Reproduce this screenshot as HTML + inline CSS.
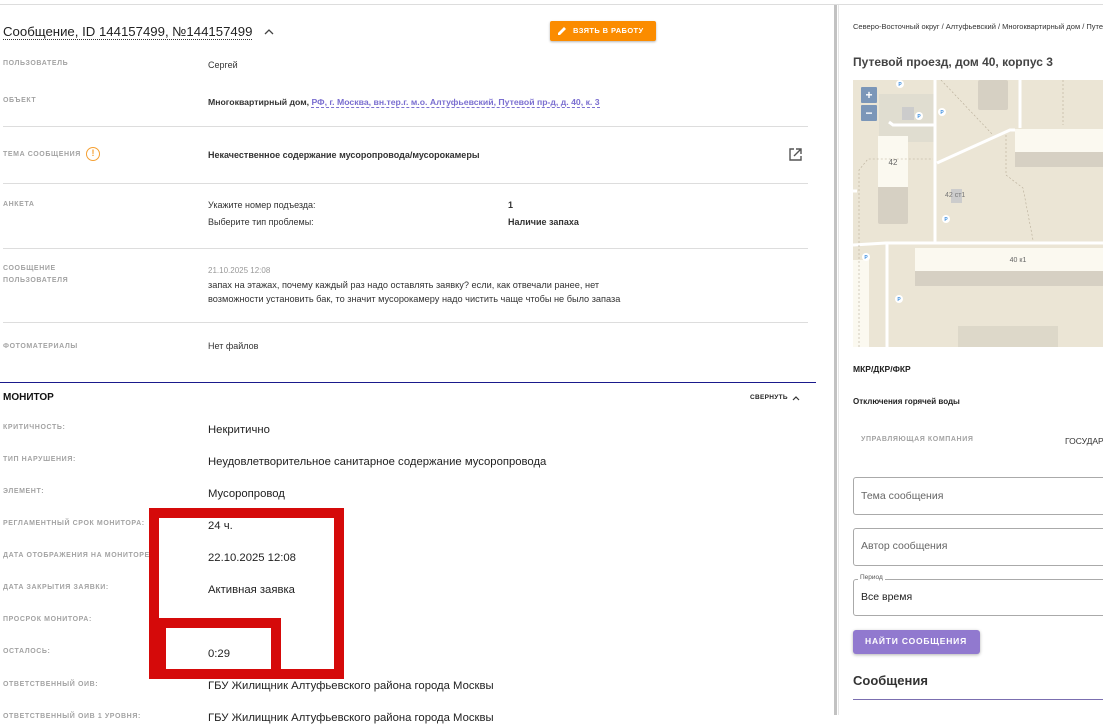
<!DOCTYPE html>
<html><head><meta charset="utf-8"><style>
*{margin:0;padding:0;box-sizing:border-box}
body{width:1103px;height:715px;overflow:hidden;background:#fff;font-family:"Liberation Sans","Noto Sans CJK SC",sans-serif;color:#333;position:relative}
.a{position:absolute;white-space:nowrap;line-height:1}
.l{font-size:7px;font-weight:bold;color:#a3a3a3;letter-spacing:.6px;text-transform:uppercase}
.v{font-size:9px;color:#333}
.m{font-size:11.3px;color:#222}
.hr{position:absolute;left:3px;width:805px;height:1px;background:#ddd}
</style></head><body>
<div style="position:absolute;left:0;top:4px;width:1103px;height:1px;background:#ddd"></div>
<div style="position:absolute;left:834px;top:5px;width:3px;height:710px;background:#c2c2c2"></div>
<div style="position:absolute;left:838px;top:5px;width:1px;height:710px;background:#e5e5e5"></div>

<div class="a" style="left:3px;top:25px;font-size:13.2px;color:#222;border-bottom:1px dotted #333;padding-bottom:1px">Сообщение, ID 144157499, №144157499</div>
<svg class="a" style="left:264px;top:28px" width="10" height="8" viewBox="0 0 10 8"><path d="M1 6 L5 2 L9 6" fill="none" stroke="#444" stroke-width="1.3"/></svg>
<div class="a" style="left:550px;top:21px;width:106px;height:20px;background:#fb8c00;border-radius:2px;box-shadow:0 1px 2px rgba(0,0,0,.3)"></div>
<svg class="a" style="left:557px;top:26px" width="10" height="10" viewBox="0 0 10 10"><path d="M1 9 L1 7 L7 1 L9 3 L3 9 Z" fill="#fff"/></svg>
<div class="a" style="left:573px;top:27px;font-size:7.5px;font-weight:bold;color:#fff;letter-spacing:.4px">ВЗЯТЬ В РАБОТУ</div>

<div class="a l" style="left:3px;top:60px">Пользователь</div>
<div class="a v" style="left:208px;top:61px">Сергей</div>
<div class="a l" style="left:3px;top:97px">Объект</div>
<div class="a v" style="left:208px;top:98px;font-weight:bold;font-size:8.7px">Многоквартирный дом, <span style="color:#7b6fd0;border-bottom:1px dashed #7b6fd0">РФ, г. Москва, вн.тер.г. м.о. Алтуфьевский, Путевой пр-д, д. 40, к. 3</span></div>
<div class="hr" style="top:126px"></div>
<div class="a l" style="left:3px;top:151px">Тема сообщения</div>
<div class="a" style="left:86px;top:147px;width:14px;height:14px;border:1.5px solid #f5a033;border-radius:50%;color:#f5a033;font-size:9px;font-weight:bold;text-align:center;line-height:11px">!</div>
<div class="a v" style="left:208px;top:151px;font-weight:bold">Некачественное содержание мусоропровода/мусорокамеры</div>
<svg class="a" style="left:789px;top:148px" width="13" height="13" viewBox="0 0 13 13"><path d="M5 1 H1 V12 H12 V8" fill="none" stroke="#555" stroke-width="1.4"/><path d="M7 1 H12 V6 M12 1 L5 8" fill="none" stroke="#555" stroke-width="1.4"/></svg>
<div class="hr" style="top:183px"></div>
<div class="a l" style="left:3px;top:201px">Анкета</div>
<div class="a v" style="left:208px;top:201px">Укажите номер подъезда:</div>
<div class="a v" style="left:508px;top:201px;font-weight:bold">1</div>
<div class="a v" style="left:208px;top:218px">Выберите тип проблемы:</div>
<div class="a v" style="left:508px;top:218px;font-weight:bold">Наличие запаха</div>
<div class="hr" style="top:248px"></div>
<div class="a l" style="left:3px;top:265px">Сообщение</div>
<div class="a l" style="left:3px;top:277px">пользователя</div>
<div class="a" style="left:208px;top:267px;font-size:8px;color:#999">21.10.2025 12:08</div>
<div class="a v" style="left:208px;top:281px;font-size:9.2px">запах на этажах, почему каждый раз надо оставлять заявку? если, как отвечали ранее, нет</div>
<div class="a v" style="left:208px;top:295px;font-size:9.2px">возможности установить бак, то значит мусорокамеру надо чистить чаще чтобы не было запаза</div>
<div class="hr" style="top:322px"></div>
<div class="a l" style="left:3px;top:343px">Фотоматериалы</div>
<div class="a v" style="left:208px;top:342px">Нет файлов</div>
<div style="position:absolute;left:0;top:382px;width:816px;height:1px;background:#1a1a8c"></div>
<div class="a" style="left:3px;top:393px;font-size:10px;font-weight:bold;color:#111">МОНИТОР</div>
<div class="a" style="left:750px;top:395px;font-size:6.5px;font-weight:bold;color:#222;letter-spacing:.3px">СВЕРНУТЬ</div>
<svg class="a" style="left:792px;top:395px" width="8" height="6" viewBox="0 0 8 6"><path d="M1 5 L4 2 L7 5" fill="none" stroke="#333" stroke-width="1.2"/></svg>

<div class="a l" style="left:3px;top:424px">Критичность:</div><div class="a m" style="left:208px;top:425px">Некритично</div>
<div class="a l" style="left:3px;top:456px">Тип нарушения:</div><div class="a m" style="left:208px;top:457px">Неудовлетворительное санитарное содержание мусоропровода</div>
<div class="a l" style="left:3px;top:488px">Элемент:</div><div class="a m" style="left:208px;top:489px">Мусоропровод</div>
<div class="a l" style="left:3px;top:520px">Регламентный срок монитора:</div><div class="a m" style="left:208px;top:521px">24 ч.</div>
<div class="a l" style="left:3px;top:552px">Дата отображения на мониторе:</div><div class="a m" style="left:208px;top:553px">22.10.2025 12:08</div>
<div class="a l" style="left:3px;top:584px">Дата закрытия заявки:</div><div class="a m" style="left:208px;top:585px">Активная заявка</div>
<div class="a l" style="left:3px;top:616px">Просрок монитора:</div>
<div class="a l" style="left:3px;top:648px">Осталось:</div><div class="a m" style="left:208px;top:649px">0:29</div>
<div class="a l" style="left:3px;top:681px">Ответственный ОИВ:</div><div class="a m" style="left:208px;top:681px">ГБУ Жилищник Алтуфьевского района города Москвы</div>
<div class="a l" style="left:3px;top:713px">Ответственный ОИВ 1 уровня:</div><div class="a m" style="left:208px;top:713px">ГБУ Жилищник Алтуфьевского района города Москвы</div>

<svg class="a" style="left:0;top:0" width="400" height="715"><path fill-rule="evenodd" fill="#d50a0a" d="M149 508 H344 V679 H149 Z M159 518 V618 H281 V669 H334 V518 Z M166 628 V669 H271 V628 Z"/></svg>

<div class="a" style="left:853px;top:23px;font-size:7.5px;color:#333">Северо-Восточный округ / Алтуфьевский / Многоквартирный дом / Путевой</div>
<div class="a" style="left:853px;top:56px;font-size:12px;font-weight:bold;color:#444">Путевой проезд, дом 40, корпус 3</div>
<svg class="a" style="left:853px;top:80px" width="250" height="267" viewBox="0 0 250 267">
<rect width="250" height="267" fill="#ebe5d5"/>
<rect x="26" y="14" width="56" height="48" fill="#e0ddd0"/>
<rect x="125" y="0" width="30" height="30" rx="2" fill="#d6d0c3"/>
<rect x="49" y="27" width="12" height="13" fill="#ccc"/>
<rect x="25" y="56" width="30" height="88" rx="2" fill="#d6d0c3"/><rect x="25" y="56" width="30" height="51" fill="#fbf9f0"/>
<text x="40" y="85" font-size="8" fill="#666" text-anchor="middle" font-family="Liberation Sans">42</text>
<rect x="162" y="49" width="88" height="38" fill="#d6d0c3"/><rect x="162" y="49" width="88" height="23" fill="#fbf9f0"/>
<rect x="62" y="168" width="188" height="38" fill="#d6d0c3"/><rect x="62" y="168" width="188" height="23" fill="#fbf9f0"/>
<text x="165" y="182" font-size="7" fill="#666" text-anchor="middle" font-family="Liberation Sans">40 к1</text>
<rect x="0" y="180" width="16" height="87" fill="#fbf9f0"/>
<rect x="98" y="109" width="11" height="14" fill="#ccc"/>
<text x="92" y="117" font-size="7" fill="#777" font-family="Liberation Sans">42 ст1</text>
<rect x="105" y="246" width="100" height="21" fill="#ddd8c9"/>
<g stroke="#fff" stroke-width="3" fill="none"><path d="M82 0 V162"/><path d="M0 165 L33 163 H250"/><path d="M34 163 V267"/><path d="M36 42 L40 45 H82"/><path d="M84 83 L157 50 H162"/><path d="M167 0 V48"/><path d="M0 111 H4"/></g>
<g stroke="#b8ad98" stroke-width=".6" stroke-dasharray="2 2" fill="none"><path d="M6 267 V90 L15 79 H80"/><path d="M88 0 L140 55"/><path d="M153 55 V95 L170 108 L180 160"/><path d="M210 0 V45"/></g>
<rect x="8" y="7" width="16" height="16" rx="1" fill="#7b96b8"/><rect x="8" y="25" width="16" height="16" rx="1" fill="#7b96b8"/>
<text x="16" y="19" font-size="12" font-weight="bold" fill="#fff" text-anchor="middle" font-family="Liberation Sans">+</text>
<text x="16" y="37" font-size="12" font-weight="bold" fill="#fff" text-anchor="middle" font-family="Liberation Sans">−</text>
<g fill="#fff"><circle cx="47" cy="4" r="4"/><circle cx="66" cy="36" r="4"/><circle cx="89" cy="32" r="4"/><circle cx="93" cy="139" r="4"/><circle cx="13" cy="177" r="4"/><circle cx="46" cy="219" r="4"/></g>
<g font-size="5" fill="#3a8de0" text-anchor="middle" font-family="Liberation Sans" font-weight="bold"><text x="47" y="6">P</text><text x="66" y="38">P</text><text x="89" y="34">P</text><text x="93" y="141">P</text><text x="13" y="179">P</text><text x="46" y="221">P</text></g>
</svg>
<div class="a" style="left:853px;top:365px;font-size:8.5px;font-weight:bold;color:#222">МКР/ДКР/ФКР</div>
<div class="a" style="left:853px;top:398px;font-size:8px;font-weight:bold;color:#222">Отключения горячей воды</div>
<div class="a l" style="left:861px;top:436px">Управляющая компания</div>
<div class="a" style="left:1065px;top:437px;font-size:8.5px;color:#333">ГОСУДАРСТВЕННОЕ</div>
<div class="a" style="left:853px;top:477px;width:260px;height:38px;border:1px solid #aaa;border-radius:3px"></div>
<div class="a" style="left:861px;top:491px;font-size:10.5px;color:#666">Тема сообщения</div>
<div class="a" style="left:853px;top:528px;width:260px;height:38px;border:1px solid #aaa;border-radius:3px"></div>
<div class="a" style="left:861px;top:541px;font-size:10.5px;color:#666">Автор сообщения</div>
<div class="a" style="left:853px;top:579px;width:260px;height:37px;border:1px solid #aaa;border-radius:3px"></div>
<div class="a" style="left:858px;top:575px;font-size:6.5px;color:#555;background:#fff;padding:0 2px">Период</div>
<div class="a" style="left:861px;top:592px;font-size:10.5px;color:#222">Все время</div>
<div class="a" style="left:853px;top:630px;width:127px;height:24px;background:#9179cf;border-radius:3px;box-shadow:0 1px 3px rgba(0,0,0,.3)"></div>
<div class="a" style="left:865px;top:637px;font-size:8.5px;font-weight:bold;color:#fff;letter-spacing:.8px">НАЙТИ СООБЩЕНИЯ</div>
<div class="a" style="left:853px;top:674px;font-size:13px;font-weight:bold;color:#333">Сообщения</div>
<div class="a" style="left:853px;top:699px;width:250px;height:1px;background:#7b6fb0"></div>
</body></html>
